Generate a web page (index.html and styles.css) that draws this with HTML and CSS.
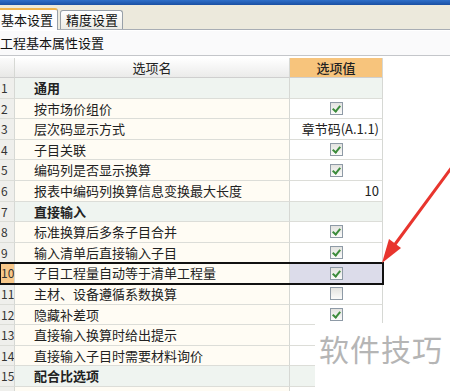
FILE: index.html
```html
<!DOCTYPE html>
<html>
<head>
<meta charset="utf-8">
<link rel="stylesheet" href="styles.css">
</head>
<body>
<div class="page">
  <div class="titlebar"></div>
  <div class="tabs">
    <div class="tab active">基本设置</div>
    <div class="tab">精度设置</div>
  </div>
  <div class="section">工程基本属性设置</div>
  <div class="grid">
    <div class="row head">
      <div class="c num"></div>
      <div class="c name">选项名</div>
      <div class="c val">选项值</div>
    </div>
    <div class="row cat"><div class="c num">1</div><div class="c name">通用</div><div class="c val"></div></div>
    <div class="row"><div class="c num">2</div><div class="c name">按市场价组价</div><div class="c val"><span class="cb on"></span></div></div>
    <div class="row"><div class="c num">3</div><div class="c name">层次码显示方式</div><div class="c val txt">章节码(A.1.1)</div></div>
    <div class="row"><div class="c num">4</div><div class="c name">子目关联</div><div class="c val"><span class="cb on"></span></div></div>
    <div class="row"><div class="c num">5</div><div class="c name">编码列是否显示换算</div><div class="c val"><span class="cb on"></span></div></div>
    <div class="row"><div class="c num">6</div><div class="c name">报表中编码列换算信息变换最大长度</div><div class="c val txt">10</div></div>
    <div class="row cat"><div class="c num">7</div><div class="c name">直接输入</div><div class="c val"></div></div>
    <div class="row"><div class="c num">8</div><div class="c name">标准换算后多条子目合并</div><div class="c val"><span class="cb on"></span></div></div>
    <div class="row"><div class="c num">9</div><div class="c name">输入清单后直接输入子目</div><div class="c val"><span class="cb on"></span></div></div>
    <div class="row sel"><div class="c num">10</div><div class="c name">子目工程量自动等于清单工程量</div><div class="c val"><span class="cb on"></span></div></div>
    <div class="row"><div class="c num">11</div><div class="c name">主材、设备遵循系数换算</div><div class="c val"><span class="cb"></span></div></div>
    <div class="row"><div class="c num">12</div><div class="c name">隐藏补差项</div><div class="c val"><span class="cb on"></span></div></div>
    <div class="row"><div class="c num">13</div><div class="c name">直接输入换算时给出提示</div><div class="c val"></div></div>
    <div class="row"><div class="c num">14</div><div class="c name">直接输入子目时需要材料询价</div><div class="c val"></div></div>
    <div class="row cat"><div class="c num">15</div><div class="c name">配合比选项</div><div class="c val"></div></div>
    <div class="row"><div class="c num"></div><div class="c name"></div><div class="c val"></div></div>
  </div>
  <svg class="arrow" width="450" height="391" viewBox="0 0 450 391">
    <line x1="455" y1="163" x2="393" y2="247" stroke="#e8352e" stroke-width="3" stroke-linecap="round"/>
    <polygon points="382,263 389,239 401,248" fill="#e8352e"/>
  </svg>
  <div class="watermark">软件技巧</div>
</div>
</body>
</html>
```
FILE: styles.css
```css
html, body {
  margin: 0;
  padding: 0;
  background: #ffffff;
}
.page {
  position: relative;
  width: 450px;
  height: 391px;
  overflow: hidden;
  font-family: "Noto Sans CJK SC", "Noto Sans", sans-serif;
  font-size: 13px;
  color: #222;
}
.titlebar {
  height: 5px;
  background: linear-gradient(#2f6fc9, #1a4fa3);
}
.tabs {
  height: 25px;
  background: #ece9dc;
  display: flex;
  align-items: flex-end;
  border-bottom: 1px solid #a8adb4;
  box-sizing: border-box;
  margin-left: -9px;
  gap: 2px;
}
.tab {
  height: 18px;
  line-height: 18px;
  padding: 0 4px 0 5px;
  border: 1px solid #98a0a8;
  border-bottom: none;
  border-radius: 3px 3px 0 0;
  background: linear-gradient(#ffffff, #ecebe5);
  font-size: 13px;
  color: #111;
}
.tab.active {
  height: 20px;
  line-height: 20px;
  padding-left: 9px;
  background: #fcfcfe;
  border-top: 2px solid #f0b44c;
  margin-bottom: -1px;
}
.section {
  height: 25px;
  line-height: 24px;
  background: #fafafb;
  border-bottom: 1px solid #c4c6ca;
  box-sizing: border-box;
  margin-top: 1px;
  font-size: 13px;
  color: #111;
}
.grid {
  margin-top: 2px;
  width: 383px;
}
.row {
  display: grid;
  grid-template-columns: 15px 275px 93px;
  height: 20.6px;
}
.c {
  box-sizing: border-box;
  border-right: 1px solid #d6d8d4;
  border-bottom: 1px solid #dcddd8;
  line-height: 20px;
  white-space: nowrap;
  overflow: hidden;
}
.num {
  background: #efefec;
  padding-left: 1px;
  font-size: 12px;
  color: #333;
}
.name {
  background: #fffcf4;
  padding-left: 19px;
}
.val {
  background: #ffffff;
  display: flex;
  align-items: center;
  justify-content: center;
}
.val.txt {
  justify-content: flex-end;
  padding-right: 3px;
}
.row.head {
  height: 20px;
}
.head .c {
  border-bottom: 1px solid #cfcfcf;
}
.head .num {
  background: linear-gradient(#fbfbfb, #e8e8e6);
}
.head .name {
  background: linear-gradient(#ffffff, #ebebea);
  text-align: center;
  padding-left: 0;
}
.head .val {
  background: #f7c47c;
  font-weight: 500;
}
.cat .name {
  background: #eff4f0;
  font-weight: 700;
}
.cat .val {
  background: #eff4f0;
}
.sel {
  outline: 2px solid #111;
  outline-offset: -1px;
  position: relative;
  z-index: 1;
}
.sel .num {
  background: #f8c88a;
}
.sel .val {
  background: #dcdcea;
}
.cb {
  width: 13px;
  height: 13px;
  box-sizing: border-box;
  border: 1px solid #8e9aa6;
  background: linear-gradient(#e3e3e0, #fbfbfa);
  position: relative;
}
.cb.on::after {
  content: "";
  position: absolute;
  left: 3px;
  top: 1px;
  width: 3px;
  height: 6px;
  border-right: 2px solid #3c8c3c;
  border-bottom: 2px solid #3c8c3c;
  transform: rotate(40deg);
}
.arrow {
  position: absolute;
  left: 0;
  top: 0;
  z-index: 2;
}
.watermark {
  position: absolute;
  left: 315px;
  top: 323px;
  width: 135px;
  height: 68px;
  background: #ffffff;
  color: #b5b5b5;
  font-size: 30px;
  line-height: 30px;
  padding: 10px 0 0 4px;
  box-sizing: border-box;
  letter-spacing: 1px;
  z-index: 3;
}
```
